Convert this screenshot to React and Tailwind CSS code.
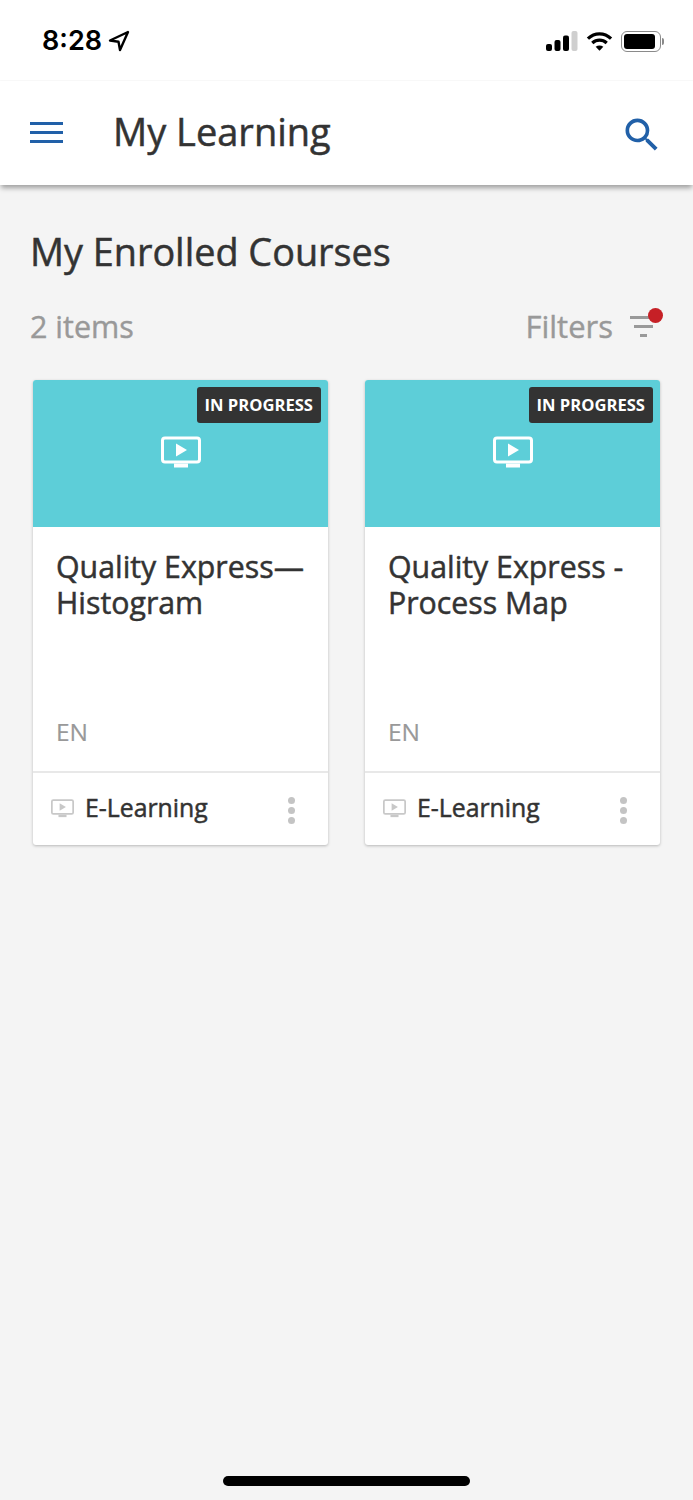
const courses = [
    { id: 1, title: "Quality Express—\nHistogram" },
    { id: 2, title: "Quality Express -\nProcess Map" },
];

function ScreenIcon({ className }) {
    return (
        <svg viewBox="0 0 40 32" className={ className } fill="none">
            <rect x="1.5" y="1.5" width="37" height="24" rx="2.5" stroke="currentColor" strokeWidth="3" />
            <path d="M15 7l11 6.5L15 20z" fill="currentColor" />
            <rect x="13" y="27" width="14" height="4" fill="currentColor" />
        </svg>
    );
}

function StatusBar() {
    return (
        <div className="h-[81px] bg-white border-b border-[#f9f9f9] flex justify-between pl-[42px] pr-[29px] pt-[25px]">
            <div className="flex items-start gap-[6px]">
                <span className="text-[27px] leading-[32px] font-semibold text-black font-['Inter',sans-serif]">8:28</span>
                <svg viewBox="0 0 22 22" className="w-[22px] h-[22px] mt-[5px]" fill="none" stroke="black" strokeWidth="2.4" strokeLinejoin="round">
                    <path d="M20 2L2 10.5l8.5 1.2L12 20z" />
                </svg>
            </div>
            <div className="flex items-start">
                <svg viewBox="0 0 32 20" className="w-[32px] h-[20px] mt-[6px]">
                    <rect x="0" y="13" width="6" height="7" rx="2" fill="black" />
                    <rect x="8.500" y="9" width="6" height="11" rx="2" fill="black" />
                    <rect x="17" y="4.500" width="6" height="15.500" rx="2" fill="black" />
                    <rect x="25.500" y="0" width="6" height="20" rx="2" fill="#cfcfcf" />
                </svg>
                <svg viewBox="0 0 28 20" className="w-[27px] h-[20px] ml-[8px] mt-[6px]" fill="none" stroke="black" strokeWidth="3.400">
                    <path d="M2 7.500c7-6.500 17-6.500 24 0" />
                    <path d="M6.500 12c4.500-4 10.500-4 15 0" />
                    <path d="M14 20l-4-4c2.400-1.800 5.600-1.800 8 0z" fill="black" stroke="none" />
                </svg>
                <div className="w-[40px] h-[21px] ml-[8px] mt-[6px] rounded-[6px] border border-[#8a8a8a] p-[2px]">
                    <div className="w-[31px] h-full rounded-[3px] bg-black" />
                </div>
                <div className="w-[2px] h-[7px] mt-[13px] ml-[1px] rounded-r-full bg-[#8a8a8a]" />
            </div>
        </div>
    );
}

function Header() {
    return (
        <div className="relative h-[104px] bg-white shadow-[0_4px_5px_-1px_rgba(0,0,0,0.35)] flex items-center pl-[30px] pr-[29px] pb-[1px]">
            <div className="w-[33px] flex flex-col gap-[6px]">
                <div className="h-[3px] bg-[#2160a8]" />
                <div className="h-[3px] bg-[#2160a8]" />
                <div className="h-[3px] bg-[#2160a8]" />
            </div>
            <h1 className="ml-[50px] mb-[4px] flex-1 text-[38px] leading-[48px] text-[#333333] [-webkit-text-stroke:0.5px_#333333]">My Learning</h1>
            <svg viewBox="0 0 24 24" className="w-[44px] h-[44px] mt-[5px] text-[#2160a8]" fill="currentColor">
                <path d="M15.5 14h-.79l-.28-.27A6.471 6.471 0 0 0 16 9.5 6.5 6.5 0 1 0 9.5 16c1.61 0 3.09-.59 4.23-1.57l.27.28v.79l5 4.99L20.49 19l-4.99-5zm-6 0C7.01 14 5 11.99 5 9.5S7.01 5 9.5 5 14 7.01 14 9.5 11.99 14 9.5 14z" />
            </svg>
        </div>
    );
}

function CourseCard({ course }) {
    return (
        <div className="w-[295px] bg-white rounded-[3px] shadow-[0_1px_3px_rgba(0,0,0,0.25)] overflow-hidden">
            <div className="relative h-[147px] bg-[#5dced8] flex justify-center pt-[56px]">
                <ScreenIcon className="w-[40px] h-[33px] text-white" />
                <div className="absolute top-[7px] right-[7px] h-[36px] px-[8px] rounded-[3px] bg-[#333333] text-white text-[16.600px] font-bold leading-[36px]">IN PROGRESS</div>
            </div>
            <div className="h-[246px] pl-[23px] pr-[19px] pt-[22px] flex flex-col justify-between pb-[24px] border-b-2 border-[#e8e8e8]">
                <div className="text-[30.300px] leading-[36px] text-[#333333] whitespace-pre-line [-webkit-text-stroke:0.5px_#333333]">{ course.title }</div>
                <div className="text-[24.500px] leading-[30px] text-[#999999] [-webkit-text-stroke:0.2px_#999999]">EN</div>
            </div>
            <div className="h-[72px] flex items-center pl-[18px] pr-[33px] pb-[4px]">
                <ScreenIcon className="w-[23px] h-[19px] mt-[2px] text-[#c8c8c8]" />
                <span className="ml-[11px] flex-1 text-[24.800px] leading-[32px] text-[#333333] [-webkit-text-stroke:0.5px_#333333]">E-Learning</span>
                <div className="flex flex-col gap-[3px] mt-[7px]">
                    <div className="w-[7px] h-[7px] rounded-full bg-[#c4c4c4]" />
                    <div className="w-[7px] h-[7px] rounded-full bg-[#c4c4c4]" />
                    <div className="w-[7px] h-[7px] rounded-full bg-[#c4c4c4]" />
                </div>
            </div>
        </div>
    );
}

export default function App() {
    return (
        <div className="relative w-[693px] h-[1500px] bg-[#f4f4f4] overflow-hidden font-['Open_Sans',sans-serif]">
            <StatusBar />
            <Header />
            <div className="pl-[30px] pr-[31px] pt-[41px]">
                <h2 className="text-[37.800px] leading-[52px] text-[#333333] [-webkit-text-stroke:0.5px_#333333]">My Enrolled Courses</h2>
                <div className="mt-[28px] flex items-center justify-between h-[40px]">
                    <span className="text-[30.500px] leading-[40px] text-[#999999] [-webkit-text-stroke:0.4px_#999999]">2 items</span>
                    <div className="flex items-center">
                        <span className="text-[31px] leading-[40px] text-[#999999] [-webkit-text-stroke:0.4px_#999999]">Filters</span>
                        <div className="relative ml-[17px] mr-[5px] w-[27px] flex flex-col items-center gap-[6px]">
                            <div className="w-[27px] h-[3px] bg-[#999999]" />
                            <div className="w-[19px] h-[3px] bg-[#999999]" />
                            <div className="w-[7px] h-[3px] bg-[#999999]" />
                            <div className="absolute -top-[8px] -right-[6px] w-[15px] h-[15px] rounded-full bg-[#c62026]" />
                        </div>
                    </div>
                </div>
                <div className="mt-[34px] ml-[3px] flex gap-[37px]">
                    { courses.map((c) => <CourseCard key={ c.id } course={ c } />) }
                </div>
            </div>
            <div className="absolute left-[223px] top-[1476px] w-[247px] h-[10px] rounded-full bg-black" />
        </div>
    );
}
